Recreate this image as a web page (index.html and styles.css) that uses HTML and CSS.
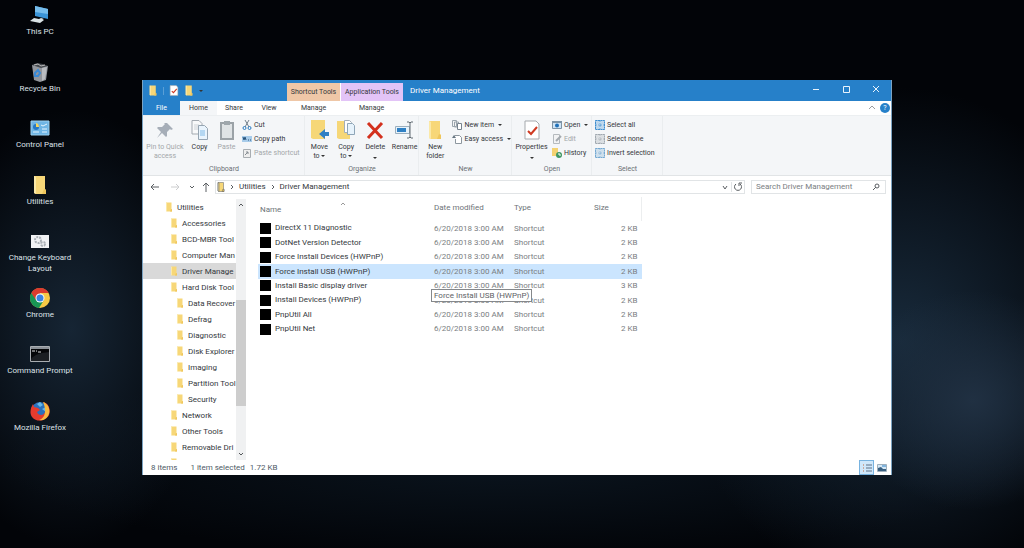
FILE: index.html
```html
<!DOCTYPE html>
<html lang="en">
<head>
  <meta charset="UTF-8" />
  <meta name="viewport" content="width=device-width, initial-scale=1.0" />
  <title>Driver Management</title>
  <link rel="stylesheet" href="styles.css">
</head>
<body>
  <svg class="sprite" aria-hidden="true">
    <symbol id="folder" viewBox="0 0 14 20">
      <path d="M1 1h11v13l1 1v4H3L1 18z" fill="#f7d778"/>
      <path d="M1 1l2 1v17l-2-1z" fill="#fbe9a8"/>
      <path d="M11 14l2 1v4H9z" fill="#efc65c"/>
    </symbol>
    <symbol id="check" viewBox="0 0 16 20">
      <path d="M1 1h11l3 3v15H1z" fill="#fff" stroke="#a5a9ad"/>
      <path d="M4 11l3 3 6-7" fill="none" stroke="#cf3a22" stroke-width="2"/>
    </symbol>
    <symbol id="grid" viewBox="0 0 10 10">
      <path d="M0 0h4v4H0zM6 0h4v4H6zM0 6h4v4H0zM6 6h4v4H6z" fill="currentColor" opacity=".3"/>
      <path d="M.5.5h9v9h-9zM5 0v10M0 5h10" fill="none" stroke="currentColor" stroke-dasharray="2 .5"/>
    </symbol>
  </svg>

  <nav class="desktop-icons" aria-label="Desktop">
    <a href="#">
      <svg viewBox="0 0 20 20"><path d="M5 1l13 3v10L5 11z" fill="#3b94d6"/><path d="M5 1l13 3v5L5 7z" fill="#76bdec"/><path d="M11 13l3 1-3 2-4-1zM4 13l10 2-4 3-10-2z" fill="#d9e2e4"/></svg>
      <span>This PC</span>
    </a>
    <a href="#">
      <svg viewBox="0 0 20 20"><path d="M2 3l16 1-2 14-6 2-6-2z" fill="#92969c"/><path d="M2 3l5-2 6 1 5 2-7 2z" fill="#44484d"/><path d="M4 3l4-1 3 2 4-1" stroke="#bbb" fill="none"/><path d="M12 6l5-1-2 12-3 2z" fill="#b9bcc0"/><path d="M5 11l3-3 2 3-2 3H5z" fill="none" stroke="#3a89d4" stroke-width="2"/></svg>
      <span>Recycle Bin</span>
    </a>
    <a href="#">
      <svg viewBox="0 0 20 20"><path d="M1 3h18v14H1z" fill="#6fb5e4" stroke="#9bd0f0"/><circle cx="6" cy="9" r="3" fill="#2778c4"/><path d="M6 9V5a4 4 0 0 1 3 4z" fill="#f5d55c"/><path d="M11 7l2 1 4-2M12 11h5M12 14h5M3 14h6" stroke="#e6f5ff" fill="none"/></svg>
      <span>Control Panel</span>
    </a>
    <a href="#">
      <svg><use href="#folder"/></svg>
      <span>Utilities</span>
    </a>
    <a href="#">
      <svg viewBox="0 0 20 20"><path d="M1 4h18v13H1z" fill="#f1f2f4"/><circle cx="8" cy="9" r="3" fill="none" stroke="#abb0b6" stroke-width="2" stroke-dasharray="2 1"/><circle cx="13" cy="13" r="2" fill="none" stroke="#abb0b6" stroke-width="2" stroke-dasharray="2 1"/></svg>
      <span>Change Keyboard Layout</span>
    </a>
    <a href="#">
      <svg viewBox="0 0 20 20"><circle cx="10" cy="10" r="10" fill="#f6c945"/><path d="M10 10L5 13 1.300 5A10 10 0 0 1 18.700 5H10z" fill="#db3b2e"/><path d="M1.300 5A10 10 0 0 0 9 20l5-8-4-2-4 2z" fill="#189554"/><circle cx="10" cy="10" r="4.500" fill="#fff"/><circle cx="10" cy="10" r="3.500" fill="#3b83e2"/></svg>
      <span>Chrome</span>
    </a>
    <a href="#">
      <svg viewBox="0 0 20 20"><path d="M.5 2.500h19v15H.5z" fill="#050608" stroke="#a9adb1"/><path d="M1 3h18v2H1z" fill="#8b9096"/><path d="M2 7h3M6 7h1M8 8h3" stroke="#ddd"/><path d="M1 15c4-5 10-6 18-7v9H1z" fill="#1b1e22"/></svg>
      <span>Command Prompt</span>
    </a>
    <a href="#">
      <svg viewBox="0 0 20 20"><circle cx="10" cy="10" r="9" fill="#2b71bd"/><path d="M10 1l3 3-3 2-3-3zM12 8l4-2v5z" fill="#65b8e8"/><path d="M3 3l1 3 4 1 2 2-3 2c1 4 7 4 8 0 3-3 1-8-2-10 6 1 8 8 6 13-3 6-12 8-17 2C-1 12 1 6 3 3z" fill="#e53b2e"/><path d="M13 1c6 2 8 9 5 14-2 3-5 5-9 4 6-2 8-9 4-18z" fill="#f7b940"/></svg>
      <span>Mozilla Firefox</span>
    </a>
  </nav>

  <main class="window">
    <header class="caption">
      <div class="quick-access">
        <button aria-label="Window menu"><svg><use href="#folder"/></svg></button>
        <i></i>
        <button aria-label="Properties"><svg><use href="#check"/></svg></button>
        <button aria-label="New folder"><svg><use href="#folder"/></svg></button>
        <button class="drop" aria-label="Customize"></button>
      </div>
      <div class="context shortcut">Shortcut Tools</div>
      <div class="context application">Application Tools</div>
      <h1>Driver Management</h1>
      <div class="window-buttons">
        <button aria-label="Minimize"><svg viewBox="0 0 8 8"><path d="M1 4.500h6"/></svg></button>
        <button aria-label="Maximize"><svg viewBox="0 0 8 8"><path d="M1.500 1.500h6v6h-6z"/></svg></button>
        <button aria-label="Close"><svg viewBox="0 0 8 8"><path d="M1 1l6 6M7 1l-6 6"/></svg></button>
      </div>
    </header>

    <div class="tabs">
      <button class="file">File</button>
      <button class="current">Home</button>
      <button>Share</button>
      <button>View</button>
      <button>Manage</button>
      <button>Manage</button>
      <div class="tabs-end">
        <button aria-label="Collapse ribbon"><svg viewBox="0 0 8 8"><path d="M1 5l3-3 3 3" fill="none" stroke="#9a9da1"/></svg></button>
        <button class="help" aria-label="Help">?</button>
      </div>
    </div>

    <div class="ribbon">
      <section class="group">
        <div class="tools">
          <button class="big wide" disabled><svg viewBox="0 0 20 20"><path d="M12 3l6 6-2 1-1-1-3 3v4l-1 1-4-4-5 5 4-6-4-4 1-1h4l3-3-1-1z" fill="#a6aeb8"/></svg>Pin to Quick access</button>
          <button class="big"><svg viewBox="0 0 18 20"><path d="M1 .5h7l3 3V14H1z" fill="#f8f9fa" stroke="#a2a9b0"/><path d="M3 5h5M3 7h4M3 9h4" stroke="#cdd2d7"/><path d="M7.500 5.500h6l3 3v11h-9z" fill="#e9f4fd" stroke="#96a5b2"/><path d="M9 10h5v6H9z" fill="#b4d7f2"/></svg>Copy</button>
          <button class="big" disabled><svg viewBox="0 0 18 20"><path d="M3 3h12v16H3z" fill="#dfe3e5" stroke="#9ba2a7" stroke-width="2"/><path d="M6 1h6v4H6z" fill="#9fa7ac"/></svg>Paste</button>
          <div class="small-tools">
            <button><svg viewBox="0 0 10 10"><path d="M3 0l4 7M7 0L3 7" stroke="#73808d"/><circle cx="2.500" cy="8" r="1.500" fill="none" stroke="#2d7cc0"/><circle cx="7.500" cy="8" r="1.500" fill="none" stroke="#2d7cc0"/></svg>Cut</button>
            <button><svg viewBox="0 0 10 10"><path d="M0 2h10v6H0z" fill="#a8ccea"/><path d="M1 3l1 3 1-3 1 3M6 6h1M8 6h1" stroke="#28557e" fill="none"/></svg>Copy path</button>
            <button disabled><svg viewBox="0 0 10 10"><path d="M1.500 1.500h7v8h-7z" fill="#eee" stroke="#a8adb1"/><path d="M3 7l3-3M4 4h2v2" stroke="#858c92" fill="none"/></svg>Paste shortcut</button>
          </div>
        </div>
        <h2>Clipboard</h2>
      </section>
      <section class="group">
        <div class="tools">
          <button class="big"><svg viewBox="0 0 20 20"><path d="M2 0h14v19H4l-2-1z" fill="#f6d778"/><path d="M20 12h-4V9l-6 5 6 5v-3h4z" fill="#2f80c4"/></svg><span>Move<br>to <i class="drop"></i></span></button>
          <button class="big"><svg viewBox="0 0 20 20"><path d="M1 1h13v18H3l-2-1z" fill="#f6d778"/><path d="M8.500.5h5l2 2v10h-7z" fill="#fff" stroke="#a3afba"/><path d="M11.500 3.500h5l2 2v9h-7z" fill="#e7f3fc" stroke="#8fa6b8"/></svg><span>Copy<br>to <i class="drop"></i></span></button>
          <button class="big delete"><svg viewBox="0 0 20 20"><path d="M3 3l14 15M17 3L3 18" stroke="#d3301d" stroke-width="3"/></svg>Delete<i class="drop"></i></button>
          <button class="big"><svg viewBox="0 0 20 20"><path d="M.5 6.500h14v7H.5z" fill="#e6f2fb" stroke="#9cafbe"/><path d="M2 8h9v4H2z" fill="#2f80c4"/><path d="M12 2h2l1 1 1-1h2M15 3v14M12 18h2l1-1 1 1h2" fill="none" stroke="#616a72"/></svg>Rename</button>
        </div>
        <h2>Organize</h2>
      </section>
      <section class="group">
        <div class="tools">
          <button class="big wider"><svg><use href="#folder"/></svg>New<br>folder</button>
          <div class="small-tools">
            <button><svg viewBox="0 0 10 10"><path d="M.5.500h4v6h-4zM2.500 2h4v5h-4z" fill="#f4f5f6" stroke="#9aa4ac"/><path d="M5.500 3.500h4v6h-4z" fill="#fff" stroke="#77838e"/></svg>New item<i class="drop"></i></button>
            <button><svg viewBox="0 0 10 10"><path d="M2.500 1.500h5l2 2v6h-6V5" fill="#fff" stroke="#8d979f"/><path d="M0 4l2-3 2 3" fill="#687783"/></svg>Easy access<i class="drop"></i></button>
          </div>
        </div>
        <h2>New</h2>
      </section>
      <section class="group">
        <div class="tools">
          <button class="big props"><svg><use href="#check"/></svg>Properties<i class="drop"></i></button>
          <div class="small-tools">
            <button><svg viewBox="0 0 10 10"><path d="M.5 1.500h9v7h-9z" fill="#cfe4f5" stroke="#7d93a5"/><path d="M0 1h10v2H0z" fill="#7d93a5"/><circle cx="5" cy="5.500" r="2" fill="#1f70b8"/></svg>Open<i class="drop"></i></button>
            <button disabled><svg viewBox="0 0 10 10"><path d="M1.500.5h6v9h-6z" fill="#f2f3f4" stroke="#b5babe"/><path d="M4 7l5-5" stroke="#a4aaaf" stroke-width="2"/></svg>Edit</button>
            <button><svg viewBox="0 0 10 10"><path d="M0 0h6v8H0z" fill="#f4d271"/><circle cx="7" cy="7" r="3" fill="#3f9662"/><path d="M7 5v2h2" stroke="#fff" fill="none"/></svg>History</button>
          </div>
        </div>
        <h2>Open</h2>
      </section>
      <section class="group">
        <div class="tools">
          <div class="small-tools selectors">
            <button><svg><use href="#grid"/></svg>Select all</button>
            <button class="none"><svg><use href="#grid"/></svg>Select none</button>
            <button class="invert"><svg><use href="#grid"/></svg>Invert selection</button>
          </div>
        </div>
        <h2>Select</h2>
      </section>
    </div>

    <div class="address-bar">
      <button aria-label="Back"><svg viewBox="0 0 10 10"><path d="M9 5H1M4 2L1 5l3 3"/></svg></button>
      <button aria-label="Forward" disabled><svg viewBox="0 0 10 10"><path d="M1 5h8M6 2l3 3-3 3"/></svg></button>
      <button class="recent" aria-label="Recent locations"><svg viewBox="0 0 10 10"><path d="M3 4l2 2 2-2"/></svg></button>
      <button class="up" aria-label="Up"><svg viewBox="0 0 10 10"><path d="M5 10V1M2 4l3-3 3 3"/></svg></button>
      <div class="path">
        <svg class="path-folder"><use href="#folder"/></svg>
        <svg viewBox="0 0 6 8"><path d="M2 2l2 2-2 2"/></svg>
        <a href="#">Utilities</a>
        <svg viewBox="0 0 6 8"><path d="M2 2l2 2-2 2"/></svg>
        <a href="#">Driver Management</a>
        <button class="history" aria-label="Previous locations"><svg viewBox="0 0 10 10"><path d="M3 4l2 3 2-3"/></svg></button>
        <button class="refresh" aria-label="Refresh"><svg viewBox="0 0 10 10"><path d="M3 2a3.500 3.500 0 1 0 4 0M6 4V1h3"/></svg></button>
      </div>
      <div class="search">
        <input type="search" aria-label="Search" placeholder="Search Driver Management">
        <svg viewBox="0 0 10 10"><circle cx="6" cy="4" r="2"/><path d="M5 5L2 8"/></svg>
      </div>
    </div>

    <div class="content">
      <nav class="tree" aria-label="Folders">
        <ul>
          <li class="root"><a href="#"><svg><use href="#folder"/></svg>Utilities</a></li>
          <li><a href="#"><svg><use href="#folder"/></svg>Accessories</a></li>
          <li><a href="#"><svg><use href="#folder"/></svg>BCD-MBR Tool</a></li>
          <li><a href="#"><svg><use href="#folder"/></svg>Computer Man</a></li>
          <li class="selected"><a href="#"><svg><use href="#folder"/></svg>Driver Manage</a></li>
          <li><a href="#"><svg><use href="#folder"/></svg>Hard Disk Tool</a></li>
          <li class="sub"><a href="#"><svg><use href="#folder"/></svg>Data Recover</a></li>
          <li class="sub"><a href="#"><svg><use href="#folder"/></svg>Defrag</a></li>
          <li class="sub"><a href="#"><svg><use href="#folder"/></svg>Diagnostic</a></li>
          <li class="sub"><a href="#"><svg><use href="#folder"/></svg>Disk Explorer</a></li>
          <li class="sub"><a href="#"><svg><use href="#folder"/></svg>Imaging</a></li>
          <li class="sub"><a href="#"><svg><use href="#folder"/></svg>Partition Tool</a></li>
          <li class="sub"><a href="#"><svg><use href="#folder"/></svg>Security</a></li>
          <li><a href="#"><svg><use href="#folder"/></svg>Network</a></li>
          <li><a href="#"><svg><use href="#folder"/></svg>Other Tools</a></li>
          <li><a href="#"><svg><use href="#folder"/></svg>Removable Dri</a></li>
          <li><a href="#" aria-label="More"><svg><use href="#folder"/></svg></a></li>
        </ul>
        <div class="scrollbar">
          <svg viewBox="0 0 8 8"><path d="M2 5l2-2 2 2"/></svg>
          <div class="track"><div class="thumb"></div></div>
          <svg viewBox="0 0 8 8"><path d="M2 3l2 2 2-2"/></svg>
        </div>
      </nav>

      <div class="files">
        <table>
          <thead>
            <tr>
              <th class="name">Name<svg viewBox="0 0 8 5"><path d="M2 4l2-2 2 2"/></svg></th>
              <th class="date">Date modified</th>
              <th class="type">Type</th>
              <th class="size">Size</th>
            </tr>
          </thead>
          <tbody>
            <tr><td><i></i>DirectX 11 Diagnostic</td><td>6/20/2018 3:00 AM</td><td>Shortcut</td><td>2 KB</td></tr>
            <tr><td><i></i>DotNet Version Detector</td><td>6/20/2018 3:00 AM</td><td>Shortcut</td><td>2 KB</td></tr>
            <tr><td><i></i>Force Install Devices (HWPnP)</td><td>6/20/2018 3:00 AM</td><td>Shortcut</td><td>2 KB</td></tr>
            <tr class="selected"><td><i></i>Force Install USB (HWPnP)</td><td>6/20/2018 3:00 AM<span class="tooltip" role="tooltip">Force Install USB (HWPnP)</span></td><td>Shortcut</td><td>2 KB</td></tr>
            <tr><td><i></i>Install Basic display driver</td><td>6/20/2018 3:00 AM</td><td>Shortcut</td><td>3 KB</td></tr>
            <tr><td><i></i>Install Devices (HWPnP)</td><td>6/20/2018 3:00 AM</td><td>Shortcut</td><td>2 KB</td></tr>
            <tr><td><i></i>PnpUtil All</td><td>6/20/2018 3:00 AM</td><td>Shortcut</td><td>2 KB</td></tr>
            <tr><td><i></i>PnpUtil Net</td><td>6/20/2018 3:00 AM</td><td>Shortcut</td><td>2 KB</td></tr>
          </tbody>
        </table>
      </div>
    </div>

    <footer class="status">
      <span>8 items</span>
      <span class="picked">1 item selected</span>
      <span>1.72 KB</span>
      <div class="views">
        <button class="on" aria-label="Details"><svg viewBox="0 0 10 10"><path d="M1 2h1M1 5h1M1 8h1" stroke="#c46b3c"/><path d="M4 2h6M4 5h6M4 8h6" stroke="#5c7186"/></svg></button>
        <button aria-label="Large icons"><svg viewBox="0 0 10 10"><path d="M.5 1.500h9v7h-9z" fill="#d5e8f6" stroke="#9fb0bd"/><path d="M1 5l3-1 2 2h3v2H1z" fill="#385f80"/><path d="M5 3h4" stroke="#2f80c4"/></svg></button>
      </div>
    </footer>
  </main>
</body>
</html>
```
FILE: styles.css
```css
:root {
  --blue: #2680c9;
  --ribbon: #f4f6f8;
  --line: #e1e4e6;
  --text: #34383c;
  --muted: #7a7e82;
  --select: #cbe5fe;
}

* { box-sizing: border-box; }

html, body {
  margin: 0;
  height: 100%;
}

body {
  position: relative;
  overflow: hidden;
  font-family: Roboto, 'Open Sans', sans-serif;
  font-size: 8px;
  line-height: 11px;
  color: var(--text);
  background:
    radial-gradient(ellipse 12% 20% at 95% 73%, #203042, transparent),
    radial-gradient(ellipse 22% 46% at 88% 62%, #182a3b, transparent),
    radial-gradient(ellipse 14% 40% at 7% 60%, #162534, transparent),
    radial-gradient(ellipse 50% 18% at 50% 84%, #0b151f, transparent),
    #020408;
}

button, input {
  font: inherit;
  color: inherit;
  padding: 0;
  border: 0;
  background: none;
}

button:disabled { color: #a3a6a9; }

a {
  color: inherit;
  text-decoration: none;
}

h1, h2 {
  margin: 0;
  font-size: inherit;
  font-weight: normal;
}

svg { flex: none; }

.sprite {
  position: absolute;
  width: 0;
  height: 0;
}

.drop {
  display: inline-block;
  border: 2px solid transparent;
  border-top-color: #333;
  border-bottom-width: 0;
  vertical-align: middle;
}

/* desktop */

.desktop-icons {
  display: grid;
  grid-auto-rows: 1fr;
  width: 80px;
  height: 457px;
  padding-top: 5px;
}

.desktop-icons a {
  display: flex;
  flex-direction: column;
  align-items: center;
  gap: 1px;
  height: 44px;
  color: #dde2e7;
  text-align: center;
}

.desktop-icons svg {
  width: 20px;
  height: 20px;
}

.desktop-icons span { max-width: 72px; }

/* window */

.window {
  position: absolute;
  inset: 80px 132px 73px 142px;
  display: flex;
  flex-direction: column;
  background: #fff;
  border: solid #7ba3c2;
  border-width: 0 1px;
}

.caption, .tabs {
  display: grid;
  grid-template-columns: 37px 37px 34px 36px 53px 63px 1fr auto;
}

.caption {
  height: 21px;
  align-items: center;
  background: var(--blue);
}

.quick-access {
  grid-column: 1 / 5;
  display: flex;
  align-items: center;
  gap: 5px;
  padding-left: 5px;
}

.quick-access button { display: flex; }

.quick-access svg {
  width: 10px;
  height: 11px;
}

.quick-access i {
  width: 1px;
  height: 8px;
  background: #5a9fd6;
}

.context {
  align-self: end;
  height: 18px;
  padding-top: 4px;
  font-size: 7px;
  text-align: center;
  white-space: nowrap;
}

.shortcut { background: #efc7a7; }

.application {
  background: #e3c4f7;
  border-left: 1px solid #fff;
}

.caption h1 {
  padding-left: 7px;
  color: #fff;
}

.window-buttons { display: flex; }

.window-buttons button { width: 30px; }

.window-buttons svg {
  width: 8px;
  height: 8px;
  fill: none;
  stroke: #e8f3fc;
}

.tabs {
  height: 14px;
  font-size: 7px;
}

.tabs .file {
  color: #fff;
  background: var(--blue);
}

.tabs .current { background: var(--ribbon); }

.tabs-end {
  grid-column: 7 / 9;
  display: flex;
  justify-content: end;
  align-items: center;
  gap: 4px;
  padding-right: 1px;
}

.tabs-end svg {
  display: block;
  width: 8px;
  height: 8px;
}

.help {
  width: 10px;
  height: 10px;
  line-height: 10px;
  color: #fff;
  background: var(--blue);
  border-radius: 50%;
}

/* ribbon */

.ribbon {
  display: grid;
  grid-template-columns: 162px 114px 93px 80px 71px;
  height: 61px;
  font-size: 7px;
  line-height: 9px;
  background: var(--ribbon);
  border-top: 1px solid #eceff1;
  border-bottom: 1px solid var(--line);
}

.group {
  display: flex;
  flex-direction: column;
  justify-content: space-between;
  padding: 4px 0 1px 1px;
  border-right: 1px solid #eaedef;
}

.group h2 {
  color: #6b7074;
  text-align: center;
}

.tools { display: flex; }

.big {
  display: flex;
  flex-direction: column;
  align-items: center;
  gap: 3px;
  width: 27px;
  height: 41px;
}

.big > svg {
  width: 20px;
  height: 20px;
}

.big > .drop { margin-top: 2px; }

.wide { width: 42px; }

.wider { width: 32px; }

.delete { width: 32px; }

.props { width: 37px; }

.small-tools {
  display: flex;
  flex-direction: column;
  gap: 4px;
  padding-left: 2px;
}

.small-tools button {
  display: flex;
  align-items: center;
  gap: 2px;
  height: 10px;
  white-space: nowrap;
}

.small-tools svg {
  width: 10px;
  height: 10px;
}

.small-tools .drop { margin-left: 2px; }

.selectors svg { color: #3f8fd0; }

.selectors .none svg { color: #a1a9b0; }

.selectors .invert svg { color: #74a9d2; }

/* address bar */

.address-bar {
  display: flex;
  align-items: center;
  height: 21px;
  padding: 0 5px 0 2px;
}

.address-bar svg {
  width: 10px;
  height: 10px;
  fill: none;
  stroke: #5a5e62;
}

.address-bar button {
  display: flex;
  justify-content: center;
  width: 20px;
}

.address-bar button:disabled { opacity: .3; }

.address-bar .recent, .address-bar .up { width: 14px; }

.path, .search {
  display: flex;
  align-items: center;
  height: 14px;
  border: 1px solid var(--line);
}

.path {
  flex: 1;
  gap: 4px;
  margin-left: 2px;
  padding-left: 1px;
}

.path > svg { width: 6px; }

.path > .path-folder { width: 8px; }

.path .history {
  width: 12px;
  margin-left: auto;
}

.path .refresh {
  width: 13px;
  margin-left: -4px;
  border-left: 1px solid var(--line);
}

.search {
  width: 135px;
  margin-left: 6px;
  padding: 0 4px;
}

.search input {
  flex: 1;
  min-width: 0;
  outline: 0;
}

.search input::placeholder { color: var(--muted); }

/* folder tree */

.content {
  flex: 1;
  display: flex;
  min-height: 0;
}

.tree {
  display: flex;
  width: 103px;
  padding-top: 2px;
}

.tree ul {
  flex: 1;
  margin: 0;
  padding: 0;
  overflow: hidden;
  list-style: none;
}

.tree a {
  display: flex;
  align-items: center;
  gap: 3px;
  height: 16px;
  padding-left: 26px;
  white-space: nowrap;
}

.tree .root a { padding-left: 21px; }

.tree .sub a { padding-left: 32px; }

.tree .selected a { background: #d9d9d9; }

.tree a svg {
  width: 10px;
  height: 10px;
}

.scrollbar {
  display: flex;
  flex-direction: column;
  align-items: center;
  width: 10px;
  padding: 2px 0;
  background: #f0f1f2;
}

.scrollbar svg {
  width: 8px;
  height: 8px;
  fill: none;
  stroke: #55585b;
}

.track {
  flex: 1;
  width: 100%;
}

.thumb {
  height: 106px;
  margin-top: 91px;
  background: #cdcdcd;
}

/* file list */

.files {
  flex: 1;
  padding: 0 0 0 12px;
}

table {
  width: 384px;
  height: 139px;
  table-layout: fixed;
  border-collapse: collapse;
}

th {
  height: 24px;
  padding: 0 0 3px 2px;
  font-weight: normal;
  text-align: left;
  color: #6d7378;
}

th svg {
  width: 8px;
  height: 5px;
  margin-left: 58px;
  vertical-align: 6px;
  fill: none;
  stroke: #999;
}

.name { width: 174px; }

.date, .type { width: 80px; }

.size { border-right: 1px solid #eceeef; }

td {
  padding: 0 0 0 2px;
  white-space: nowrap;
  color: var(--muted);
}

td:first-child { color: var(--text); }

td:last-child {
  padding-right: 4px;
  text-align: right;
}

td i {
  display: inline-block;
  width: 11px;
  height: 11px;
  margin-right: 4px;
  vertical-align: middle;
  background: #000;
}

tbody .selected { background: var(--select); }

.selected td { position: relative; }

.tooltip {
  position: absolute;
  z-index: 1;
  top: 25px;
  left: -1px;
  padding: 0 2px;
  background: #fff;
  border: 1px solid #85888b;
  color: #5e6266;
}

/* status bar */

.status {
  display: flex;
  align-items: center;
  height: 15px;
  padding: 0 2px 0 8px;
  color: #4e5a66;
}

.picked { margin: 0 5px 0 13px; }

.views {
  display: flex;
  margin-left: auto;
}

.views button {
  display: grid;
  place-items: center;
  width: 15px;
  height: 15px;
}

.views svg {
  width: 10px;
  height: 10px;
}

.views .on {
  background: #cfe7fa;
  border: 1px solid #78b3e0;
}
```
